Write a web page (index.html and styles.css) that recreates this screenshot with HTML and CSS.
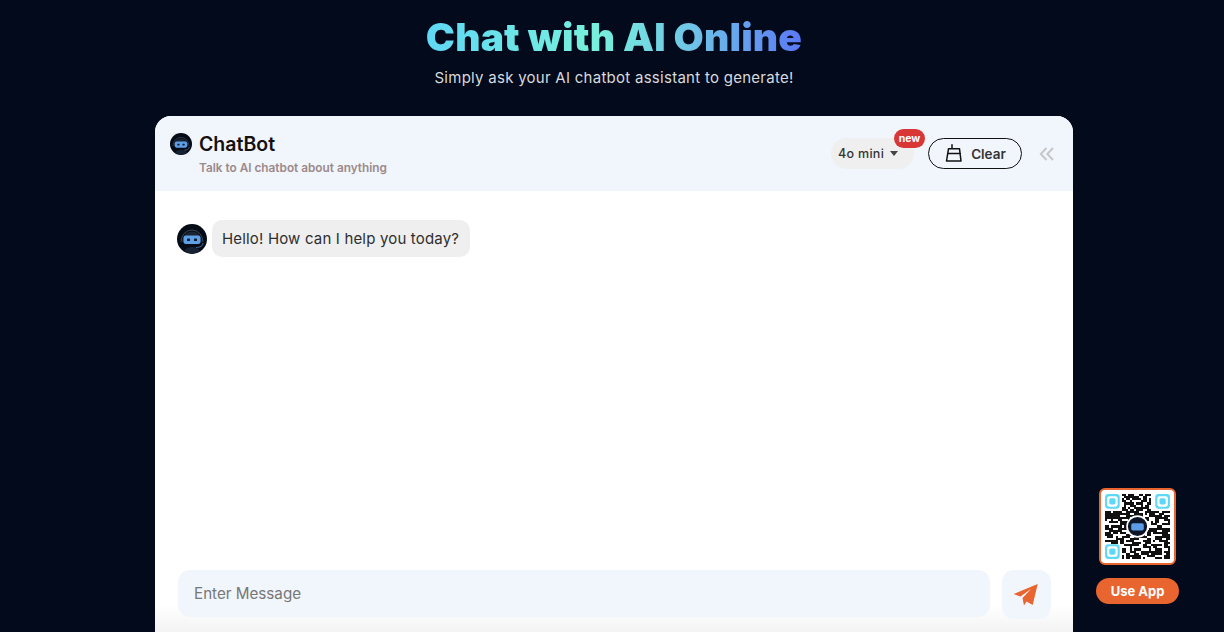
FILE: index.html
```html
<!DOCTYPE html>
<html lang="en">
<head>
<meta charset="utf-8">
<title>Chat with AI Online</title>
<link rel="stylesheet" href="styles.css">
</head>
<body>
<main class="page">
  <header class="hero">
    <h1 class="hero-title"><span class="gradient">Chat with AI Online</span></h1>
    <p class="hero-sub">Simply ask your AI chatbot assistant to generate!</p>
  </header>
  <section class="panel">
    <div class="panel-head">
      <div class="brand">
        <div class="brand-row">
          <svg class="bot bot-small" viewBox="0 0 30 30"><use href="#bot"/></svg>
          <span class="brand-name">ChatBot</span>
        </div>
        <div class="brand-sub">Talk to AI chatbot about anything</div>
      </div>
      <div class="tools">
        <div class="model">4o mini<span class="caret"></span><span class="badge">new</span></div>
        <button class="clear">
          <svg class="clear-icon" viewBox="0 0 18 18"><path d="M7 .8v4M3.500 4.800h11L16 17H1.500zM2.600 9.500h12.800" fill="none" stroke="#111" stroke-width="1.500" stroke-linecap="round" stroke-linejoin="round"/></svg>
          Clear
        </button>
        <svg class="collapse" viewBox="0 0 16 16"><path d="M7.500 2 1.800 8l5.700 6M14 2 8.300 8l5.700 6" fill="none" stroke="#c6c6c9" stroke-width="1.900"/></svg>
      </div>
    </div>
    <div class="messages">
      <div class="msg">
        <svg class="bot bot-large" viewBox="0 0 30 30"><use href="#bot"/></svg>
        <div class="bubble">Hello! How can I help you today?</div>
      </div>
    </div>
    <div class="composer">
      <div class="input">Enter Message</div>
      <button class="send" aria-label="Send">
        <svg viewBox="0 0 25 22" class="send-icon"><path d="M24.700 0 .7 10l6.800 2.600L18 5l-8.500 9 1.500 7.500 2.600-4 6.100 3.500z" fill="#e8652f"/></svg>
      </button>
    </div>
  </section>
  <aside class="app-promo">
    <div class="qr">
      <svg viewBox="0 0 33 33" class="qr-svg" shape-rendering="crispEdges">
        <path fill="#111" d="M9 1h2v1H9zM12 1h3v2h-3zM17 1h2v1h-2zM20 1h3v1h-3zM9 3h1v2H9zM11 3h2v1h-2zM14 3h4v1h-4zM19 3h2v2h-2zM22 3h1v3h-1zM10 5h3v1h-3zM14 5h1v2h-1zM16 5h2v1h-2zM20 6h2v1h-2zM9 7h2v2H9zM12 7h1v1h-1zM16 7h3v2h-3zM21 8h2v1h-2zM1 9h3v1H1zM5 9h2v2H5zM12 9h3v1h-3zM20 9h1v2h-1zM24 9h3v1h-3zM28 9h4v1h-4zM2 11h2v2H2zM8 10h3v1H8zM13 11h2v1h-2zM17 10h2v2h-2zM22 10h3v2h-3zM27 11h1v2h-1zM29 11h3v1h-3zM1 13h1v1H1zM5 12h3v1H5zM9 12h3v1H9zM20 12h2v1h-2zM25 13h2v2h-2zM29 13h2v1h-2zM3 14h4v1H3zM8 14h2v2H8zM23 14h1v2h-1zM28 15h4v1h-4zM1 16h2v2H1zM4 16h3v1H4zM9 17h3v1H9zM22 17h3v1h-3zM26 16h2v2h-2zM30 17h2v2h-2zM5 18h2v2H5zM8 19h3v1H8zM21 19h2v2h-2zM24 19h4v1h-4zM1 19h3v1H1zM2 21h3v1H2zM6 21h1v2H6zM9 21h4v1H9zM15 21h2v2h-2zM18 20h2v1h-2zM25 21h1v2h-1zM28 20h2v2h-2zM1 23h3v1H1zM8 23h2v2H8zM11 23h2v1h-2zM19 23h4v1h-4zM24 23h1v1h-1zM27 23h4v1h-4zM4 24h3v1H4zM14 24h4v1h-4zM10 25h3v1h-3zM19 25h2v2h-2zM23 25h5v1h-5zM29 25h2v2h-2zM9 27h2v2H9zM13 26h1v3h-1zM15 27h3v1h-3zM22 27h1v2h-1zM25 27h3v3h-3zM29 28h3v1h-3zM11 29h2v3h-2zM15 29h2v1h-2zM18 28h2v2h-2zM21 30h3v1h-3zM9 30h1v2H9zM14 31h4v1h-4zM19 31h1v1h-1zM29 30h1v2h-1zM25 31h3v1h-3z"/>
        <path fill="#111" d="M10 2h2v1h-2zM15 2h2v2h-2zM19 2h2v1h-2zM10 4h1v3h-1zM13 4h1v3h-1zM18 4h1v3h-1zM21 5h1v3h-1zM15 6h1v2h-1zM11 8h1v2h-1zM13 8h2v1h-2zM19 7h2v1h-2zM1 10h4v1H1zM7 9h2v2H7zM15 9h2v3h-2zM21 9h3v1h-3zM27 10h2v1h-2zM1 11h1v2H1zM4 11h4v1H4zM11 10h2v3h-2zM25 11h2v2h-2zM4 12h1v2H4zM7 12h2v2H7zM28 12h3v1h-3zM12 13h2v2h-2zM19 13h3v1h-3zM31 13h1v2h-1zM10 14h2v3h-2zM24 15h2v1h-2zM7 16h2v3H7zM3 17h2v2H3zM12 16h1v3h-1zM24 17h2v2h-2zM28 17h2v2h-2zM20 18h4v1h-4zM28 19h3v1h-3zM1 20h4v1H1zM11 20h5v1h-5zM30 20h2v3h-2zM17 21h4v1h-4zM26 21h2v2h-2zM7 22h3v1H7zM13 22h2v2h-2zM21 22h2v1h-2zM4 23h3v1H4zM20 24h3v1h-3zM29 24h3v1h-3zM13 25h4v1h-4zM21 26h2v1h-2zM24 26h2v1h-2zM14 28h2v1h-2zM20 28h2v2h-2zM23 28h2v3h-2zM31 26h1v2h-1zM13 30h5v1h-5zM30 29h2v3h-2z"/>
        <g class="finder" shape-rendering="auto"><rect x="1" y="1" width="7" height="7" rx="1.500"/><rect x="25" y="1" width="7" height="7" rx="1.500"/><rect x="1" y="25" width="7" height="7" rx="1.500"/></g>
        <g class="finder-dot" shape-rendering="auto"><rect x="2" y="2" width="5" height="5" rx="1"/><rect x="26" y="2" width="5" height="5" rx="1"/><rect x="2" y="26" width="5" height="5" rx="1"/></g>
        <g class="finder" shape-rendering="auto"><rect x="3" y="3" width="3" height="3" rx=".8"/><rect x="27" y="3" width="3" height="3" rx=".8"/><rect x="3" y="27" width="3" height="3" rx=".8"/></g>
        <circle cx="16.500" cy="16.500" r="5" fill="#0d1626" stroke="#fff" stroke-width=".8" shape-rendering="auto"/>
        <rect x="13.500" y="15" width="6" height="3.400" rx=".8" fill="#5b9be8" shape-rendering="auto"/>
      </svg>
    </div>
    <button class="use-app">Use App</button>
  </aside>
</main>
<svg class="defs" aria-hidden="true">
  <symbol id="bot" viewBox="0 0 30 30">
    <circle cx="15" cy="15" r="15" fill="#070d16"/>
    <path d="M5 18a10 10.500 0 0 1 20 0" fill="#1b2431"/>
    <path d="M4 18a11 12 0 0 1 22 0" fill="none" stroke="#3a4554" stroke-width="1"/>
    <rect x="6.500" y="11.500" width="17" height="8.500" rx="2.500" fill="#5f9fe6"/>
    <rect x="10" y="14.500" width="3" height="2.500" rx=".5" fill="#0e1b30"/>
    <rect x="17" y="14.500" width="3" height="2.500" rx=".5" fill="#0e1b30"/>
    <path d="M26 19c0 3-3 4.500-7 4.500" fill="none" stroke="#4a6a8f" stroke-width="1"/>
    <path d="M7 27a15 15 0 0 0 16 0c-2-3-5-4-8-4s-6 1-8 4z" fill="#172233"/>
  </symbol>
</svg>
```
FILE: styles.css
```css
* { box-sizing: border-box; }
html, body { margin: 0; height: 100%; }
body {
  background: #020a1b;
  font-family: Inter, "Liberation Sans", sans-serif;
  overflow: hidden;
}
.page { position: relative; height: 632px; display: flex; flex-direction: column; align-items: center; }
.hero { display: flex; flex-direction: column; align-items: center; padding-top: 12px; height: 116px; padding-left: 4px; }
.hero-title { margin: 0; font-size: 39px; line-height: 50px; font-weight: 900; letter-spacing: .15px; white-space: nowrap; }
.gradient {
  background: linear-gradient(90deg, #5fd8f5 0%, #78f0dc 45%, #6fc6e6 70%, #5a78f5 100%);
  -webkit-background-clip: text;
  background-clip: text;
  color: transparent;
}
.hero-sub { margin: 6px 0 0; font-size: 15px; line-height: 20px; color: #d9dadd; letter-spacing: .27px; white-space: nowrap; }
.panel {
  width: 918px; height: 516px; margin-left: 4px;
  background: #fff; border-radius: 16px 16px 0 0;
  display: flex; flex-direction: column; overflow: hidden;
}
.panel-head {
  height: 75px; background: #f1f5fc; flex: none;
  display: flex; justify-content: space-between; align-items: flex-start;
  padding: 16px 18px 0 15px;
}
.brand-row { display: flex; align-items: center; gap: 7px; height: 24px; }
.bot { display: block; flex: none; }
.bot-small { width: 22px; height: 22px; }
.bot-large { width: 30px; height: 30px; }
.brand-name { font-size: 19.500px; font-weight: 600; color: #16100f; }
.brand-sub { margin: 5px 0 0 29px; font-size: 11.800px; line-height: 15px; font-weight: 600; color: #9b8a8a; white-space: nowrap; }
.tools { display: flex; align-items: center; gap: 14px; padding-top: 6px; }
.model {
  position: relative; width: 83px; height: 31px; border-radius: 16px; background: #efefef;
  display: flex; align-items: center; padding-left: 7px; font-size: 12.500px; font-weight: 500; color: #333; letter-spacing: .3px; white-space: nowrap;
}
.caret { margin-left: 6px; border: 4.500px solid transparent; border-top: 5px solid #444; border-bottom: 0; }
.badge {
  position: absolute; left: 63px; top: -9px; width: 31px; height: 19px; border-radius: 10px;
  background: #d93636; color: #fff; font-size: 10.500px; font-weight: 700;
  display: flex; align-items: center; justify-content: center; letter-spacing: 0;
}
.clear {
  width: 94px; height: 31px; background: transparent; border: 1.200px solid #111; border-radius: 16px;
  display: flex; align-items: center; justify-content: center; gap: 8px; padding: 0 0 0 1px;
  font: 600 13.500px Inter, "Liberation Sans", sans-serif; color: #333;
}
.clear-icon { width: 18px; height: 18px; margin-bottom: 1px; }
.collapse { width: 16px; height: 16px; margin-left: 3px; }
.messages { flex: 1; padding: 29px 22px 0 22px; }
.msg { display: flex; align-items: center; gap: 5px; }
.bubble {
  height: 37px; padding: 0 11px 0 10px; background: #efefef; border-radius: 10px;
  display: flex; align-items: center; font-size: 15px; color: #2e2e2e; letter-spacing: .17px; white-space: nowrap;
}
.composer {
  height: 66px; flex: none; display: flex; gap: 12px; padding: 4px 22px 0 23px;
  background: linear-gradient(#fff 60%, #f3f3f3 100%);
}
.input {
  width: 812px; height: 47px; background: #f1f5fc; border-radius: 12px;
  display: flex; align-items: center; padding-left: 16px; font-size: 15.200px; color: #777;
}
.send {
  width: 49px; height: 49px; border: 0; padding: 0 3px 0 0; background: #f1f5fc; border-radius: 12px;
  display: flex; align-items: center; justify-content: center;
}
.send-icon { width: 25px; height: 22px; }
.app-promo {
  position: absolute; left: 1096px; top: 488px; width: 83px;
  display: flex; flex-direction: column; align-items: center; gap: 13px;
}
.qr { width: 77px; height: 77px; background: #fff; border: 2px solid #e8652f; border-radius: 6px; padding: 2px; }
.qr-svg { display: block; width: 100%; height: 100%; }
.finder rect { fill: #5fd8f5; }
.finder-dot rect { fill: #fff; }
.use-app {
  width: 83px; height: 26px; border: 0; border-radius: 13px; background: #e8652f; color: #fff;
  font: 700 13px Inter, "Liberation Sans", sans-serif; padding: 0;
}
.defs { position: absolute; width: 0; height: 0; }
```
